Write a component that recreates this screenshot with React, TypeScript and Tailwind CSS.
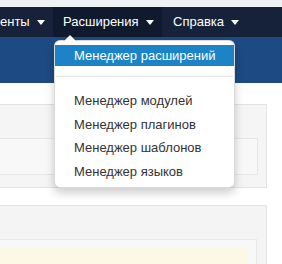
import React from "react";

function Caret() {
  return (
    <span className="inline-block w-0 h-0 border-t-[5px] border-x-[4.5px] border-x-transparent border-t-white ml-[7px] mt-[1px]" />
  );
}

export default function App() {
  const items = [
    "Менеджер модулей",
    "Менеджер плагинов",
    "Менеджер шаблонов",
    "Менеджер языков",
  ];
  return (
    <div
      className="relative w-[282px] h-[264px] overflow-hidden bg-white"
      style={{ fontFamily: '"Liberation Sans", Arial, sans-serif' }}
    >
      <div className="h-[7px] bg-[#eef0f4]" />
      <nav className="h-[30px] bg-[#15223a] flex items-stretch text-white text-[13px] whitespace-nowrap">
        <div className="flex items-center w-[53px]">
          <span>енты</span>
          <Caret />
        </div>
        <div className="flex items-center pl-[10px] bg-[#0f1a2e] w-[109px]">
          <span>Расширения</span>
          <Caret />
        </div>
        <div className="flex items-center pl-[11px] pr-[8px]">
          <span>Справка</span>
          <Caret />
        </div>
      </nav>
      <div className="h-[46px] bg-[#1d4a82]" />
      <div className="pt-[21px] pr-[15px]">
        <div className="bg-[#f5f5f5] border border-l-0 border-[#e3e3e3] pt-[33px] pr-[8px] h-[84px]">
          <div className="border border-l-0 border-[#e6e6e6] h-[37px] bg-[#f8f8f8]" />
        </div>
        <div className="mt-[17px] bg-[#f4f4f4] border border-l-0 border-[#e3e3e3] pt-[33px] pr-[9px] h-[80px]">
          <div className="border border-l-0 border-[#e8e8e8] bg-[#f8f8f8] pt-[8px] pr-[9px] h-[60px]">
            <div className="bg-[#fdf7e6] h-full" />
          </div>
        </div>
      </div>

      <div className="absolute left-[54px] top-[40px] w-[181px] bg-white rounded-[6px] border border-[rgba(0,0,0,0.15)] shadow-[0_5px_10px_rgba(0,0,0,0.2)] py-[4px] text-[13px] text-[#333] whitespace-nowrap">
        <span className="absolute -top-[7px] left-[8px] w-0 h-0 border-b-[7px] border-x-[7px] border-x-transparent border-b-[rgba(0,0,0,0.2)]" />
        <span className="absolute -top-[6px] left-[9px] w-0 h-0 border-b-[6px] border-x-[6px] border-x-transparent border-b-white" />
        <div className="h-[21px] leading-[21px] px-[19px] bg-[#1c84c6] text-white">
          Менеджер расширений
        </div>
        <div className="mt-[10px] mb-[12px] mx-[1px] h-px bg-[#e5e5e5]" />
        {items.map((t) => (
          <div key={t} className="h-[23.5px] leading-[23.5px] px-[19px]">
            {t}
          </div>
        ))}
      </div>
    </div>
  );
}
